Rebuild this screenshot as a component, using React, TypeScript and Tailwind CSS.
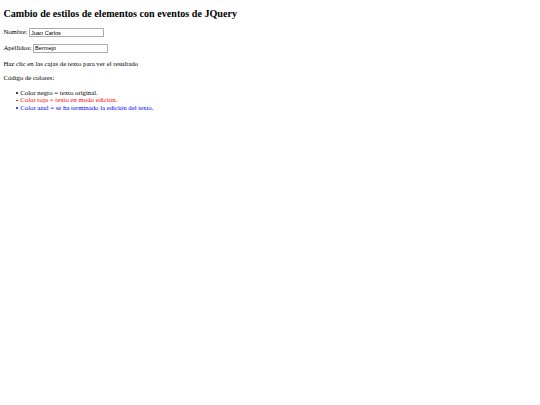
const inputCls =
  "w-[177px] h-[21px] border border-[#ababab] rounded-[2px] px-[2px] py-[1px] bg-white text-black text-[13.333px] leading-[normal] font-['Liberation_Sans',Arial,sans-serif] align-baseline";

function Bullet() {
  return <span className="absolute left-[-11px] top-[7.5px] w-[4.5px] h-[4.5px] rounded-full bg-current" />;
}

export default function App() {
  return (
    <div className="[zoom:0.421875] w-[1280px] min-h-[960px] bg-white text-black flow-root px-2 pb-2 font-['Liberation_Serif','Times_New_Roman',serif] text-[16px] leading-[18.4px]">
      <h2 className="text-[24px] leading-[27.6px] font-bold mt-[19.92px] mb-[19.92px]">
        Cambio de estilos de elementos con eventos de JQuery
      </h2>
      <p className="my-4">
        Nombre: <input type="text" defaultValue="Juan Carlos" className={inputCls} />
      </p>
      <p className="my-4">
        Apellidos: <input type="text" defaultValue="Bermejo" className={inputCls} />
      </p>
      <p className="my-4">Haz clic en las cajas de texto para ver el resultado</p>
      <p className="my-4">Código de colores:</p>
      <ul className="list-none pl-10 my-4">
        <li className="relative">
          <Bullet />
          Color negro = texto original.
        </li>
        <li className="relative text-[#ff0000]">
          <Bullet />
          Color rojo = texto en modo edición.
        </li>
        <li className="relative text-[#0000ff]">
          <Bullet />
          Color azul = se ha terminado la edición del texto.
        </li>
      </ul>
    </div>
  );
}
